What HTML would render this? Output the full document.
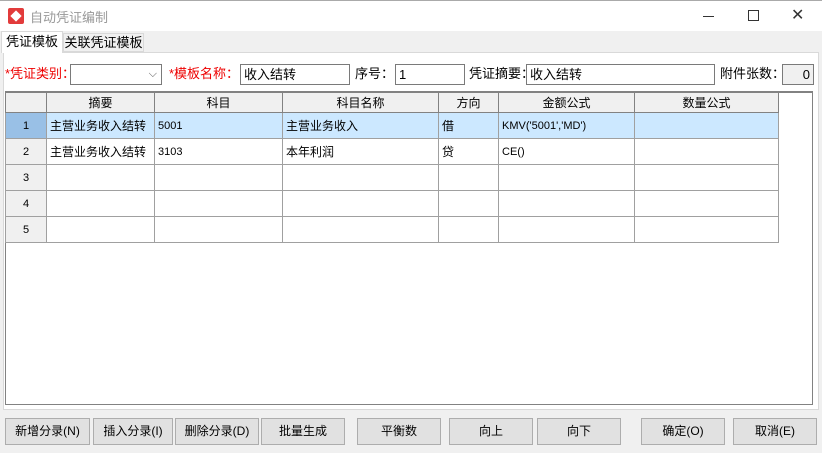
<!DOCTYPE html>
<html><head><meta charset="utf-8"><style>
*{box-sizing:border-box;margin:0;padding:0}
body{width:822px;height:453px;background:#f0f0f0;font-family:"Liberation Sans","Noto Sans CJK SC",sans-serif;font-size:12px;color:#000;position:relative;overflow:hidden}
.a{position:absolute}
.title{left:0;top:0;width:822px;height:31px;background:#fff;border-top:1px solid #aaa}
.tab{top:32px;height:21px;border:1px solid #d9d9d9;border-bottom:none;text-align:center;line-height:19px;font-size:13px}
.panel{left:3px;top:52px;width:816px;height:358px;background:#fff;border:1px solid #d9d9d9}
.lbl{font-size:13px;line-height:20px;top:64px}
.inp{top:64px;height:21px;border:1px solid #7a7a7a;background:#fff;font-size:13px;line-height:19px;padding-left:3px}
.grid{left:5px;top:91px;width:808px;height:314px;border:1px solid #828282;border-top:2px solid #828282;background:#fff}
table{border-collapse:collapse;position:absolute;left:5px;top:92px}
td{border:1px solid #a0a0a0;height:26px;font-size:12px;padding-left:3px;white-space:nowrap}
tr.h td{height:20px;background:#f0f0f0;text-align:center;border-color:#828282;font-size:12px;padding:0}
td.rh{background:#f0f0f0;text-align:center;padding:0;font-size:11px;border-color:#a0a0a0}
tr.s td{background:#cce8ff}
tr.s td.rh{background:#99c0e6}
.btn{top:418px;height:27px;border:1px solid #adadad;background:#e1e1e1;text-align:center;line-height:25px;font-size:12px}
</style></head><body>
<div class="a title">
 <div class="a" style="left:8px;top:7px;width:16px;height:16px;background:#e23b3b;border-radius:2px"><div class="a" style="left:4px;top:4px;width:8px;height:8px;background:#fff;transform:rotate(45deg)"></div></div>
 <div class="a" style="left:30px;top:6px;font-size:13px;color:#999">自动凭证编制</div>
 <div class="a" style="left:703px;top:15px;width:11px;height:1px;background:#333"></div>
 <div class="a" style="left:748px;top:9px;width:11px;height:11px;border:1px solid #333"></div>
 <div class="a" style="left:791px;top:4px;font-size:16px;color:#333">✕</div>
</div>
<div class="a panel"></div>
<div class="a tab" style="left:1px;width:62px;top:31px;height:22px;background:#fff">凭证模板</div>
<div class="a tab" style="left:63px;width:81px;top:33px;height:19px;background:#f0f0f0;line-height:17px;border-bottom:1px solid #d9d9d9">关联凭证模板</div>

<div class="a lbl" style="left:5px;color:#e00">*凭证类别：</div>
<div class="a inp" style="left:70px;width:92px"><span class="a" style="right:4px;top:0;color:#555;font-size:11px">⌵</span></div>
<div class="a lbl" style="left:169px;color:#e00">*模板名称：</div>
<div class="a inp" style="left:240px;width:110px">收入结转</div>
<div class="a lbl" style="left:355px">序号：</div>
<div class="a inp" style="left:395px;width:70px">1</div>
<div class="a lbl" style="left:469px">凭证摘要：</div>
<div class="a inp" style="left:526px;width:189px">收入结转</div>
<div class="a lbl" style="left:720px">附件张数：</div>
<div class="a inp" style="left:782px;width:32px;background:#f0f0f0;text-align:right;padding-right:3px">0</div>

<div class="a grid"></div>
<table>
<colgroup><col style="width:41px"><col style="width:108px"><col style="width:128px"><col style="width:156px"><col style="width:60px"><col style="width:136px"><col style="width:144px"></colgroup>
<tr class="h"><td></td><td>摘要</td><td>科目</td><td>科目名称</td><td>方向</td><td>金额公式</td><td>数量公式</td></tr>
<tr class="s"><td class="rh">1</td><td>主营业务收入结转</td><td style="font-size:11px">5001</td><td>主营业务收入</td><td>借</td><td style="font-size:11px">KMV('5001','MD')</td><td></td></tr>
<tr><td class="rh">2</td><td>主营业务收入结转</td><td style="font-size:11px">3103</td><td>本年利润</td><td>贷</td><td style="font-size:11px">CE()</td><td></td></tr>
<tr><td class="rh">3</td><td></td><td></td><td></td><td></td><td></td><td></td></tr>
<tr><td class="rh">4</td><td></td><td></td><td></td><td></td><td></td><td></td></tr>
<tr><td class="rh">5</td><td></td><td></td><td></td><td></td><td></td><td></td></tr>
</table>

<div class="a btn" style="left:5px;width:85px">新增分录(N)</div>
<div class="a btn" style="left:93px;width:80px">插入分录(I)</div>
<div class="a btn" style="left:175px;width:84px">删除分录(D)</div>
<div class="a btn" style="left:261px;width:84px">批量生成</div>
<div class="a btn" style="left:357px;width:84px">平衡数</div>
<div class="a btn" style="left:449px;width:84px">向上</div>
<div class="a btn" style="left:537px;width:84px">向下</div>
<div class="a btn" style="left:641px;width:84px">确定(O)</div>
<div class="a btn" style="left:733px;width:84px">取消(E)</div>
</body></html>
